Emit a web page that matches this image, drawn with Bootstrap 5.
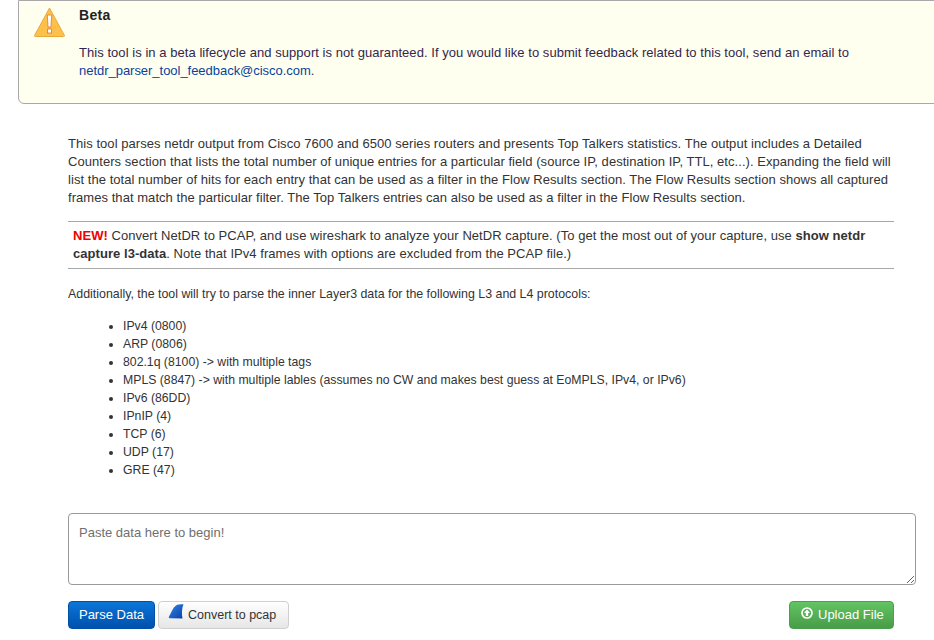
<!DOCTYPE html>
<html lang="en">
  <head>
    <meta charset="UTF-8" />
    <meta name="viewport" content="width=device-width, initial-scale=1.0" />
    <title>NetDR Parser</title>
    <link
      rel="stylesheet"
      href="https://cdn.jsdelivr.net/npm/bootstrap@5.3.0/dist/css/bootstrap.min.css"
    />
    <style>
      body {
        font-family: "Liberation Sans", Arial, sans-serif;
        font-size: 13px;
        line-height: 18px;
        letter-spacing: 0.05px;
        color: #333;
        background: #fff;
        overflow: hidden;
        height: 640px;
      }
      a {
        color: #0a3f9e;
        text-decoration: none;
        letter-spacing: -0.03px;
      }
      p {
        margin: 0;
      }
      .beta-box {
        margin-left: 18px;
        margin-right: -10px;
        height: 104px;
        background: #ffffef;
        border: 1px solid #a8a8a8;
        border-radius: 0 0 0 6px;
        color: #33264d;
      }
      .beta-icon {
        width: 60px;
        padding: 6px 0 0 15px;
        flex: none;
      }
      .beta-title {
        font-size: 14px;
        letter-spacing: 0.3px;
        font-weight: 700;
        color: #222;
        padding-top: 5px;
        margin-bottom: 20px;
      }
      .beta-text {
        padding-right: 80px;
      }
      .page-body {
        padding: 31px 40px 0 68px;
      }
      .new-note {
        border-top: 1px solid #a8a8a8;
        border-bottom: 1px solid #a8a8a8;
        margin: 14px 0 16px;
        padding: 5px;
        height: 48px;
      }
      .new-flag {
        color: #f00000;
        font-weight: 700;
      }
      .plain-line {
        font-size: 12.4px;
        letter-spacing: 0;
      }
      .proto-list {
        margin: 14px 0 0;
        padding-left: 55px;
        font-size: 12.25px;
        letter-spacing: 0;
      }
      .paste-box {
        display: block;
        width: 848px;
        height: 72px;
        margin: 34px 0 16px;
        padding: 10px;
        font-size: 13px;
        line-height: 18px;
        color: #333;
        border: 1px solid #999;
        border-radius: 4px;
      }
      .paste-box::placeholder {
        color: #6f6f6f;
        opacity: 1;
      }
      .btn-row .btn {
        font-size: 13px;
        line-height: 18px;
        height: 28px;
        padding: 4px 10px;
        border-radius: 4px;
        white-space: nowrap;
      }
      .btn-row .btn-parse {
        width: 87px;
        padding: 4px 0;
        color: #fff;
        background: linear-gradient(#0a76d8, #0050ad);
        border: 1px solid #0050a8;
      }
      .btn-row .btn-pcap {
        width: 131px;
        margin-left: 3px;
        padding: 4px 9px;
        font-size: 12.5px;
        color: #333;
        background: linear-gradient(#ffffff, #e6e6e6);
        border: 1px solid #cfcfcf;
      }
      .btn-pcap svg {
        flex: none;
        margin-bottom: 6px;
      }
      .btn-row .btn-upload {
        width: 105px;
        padding: 4px 10px 4px 11px;
        gap: 5px;
        color: #fff;
        background: linear-gradient(#62c462, #489c48);
        border: 1px solid #4a9f4a;
      }
      .btn-upload svg {
        flex: none;
        margin-bottom: 4px;
      }
    </style>
  </head>
  <body>
    <div class="beta-box d-flex">
      <div class="beta-icon">
        <svg width="31" height="31" viewBox="0 0 31 31">
          <path d="M15.5 1 L30.5 28.5 Q30.7 29.5 29.5 29.5 L1.5 29.5 Q.3 29.5 .5 28.5 Z" fill="#fdc04a" stroke="#e8a93c" stroke-width="1" />
          <path d="M13.3 8 h4.4 l-.7 12 h-3 Z" fill="#fff" stroke="#e2762a" stroke-width=".8" />
          <rect x="13.5" y="22" width="4" height="4" fill="#fff" stroke="#e2762a" stroke-width=".8" />
        </svg>
      </div>
      <div class="flex-grow-1">
        <div class="beta-title">Beta</div>
        <p class="beta-text">This tool is in a beta lifecycle and support is not guaranteed. If you would like to submit feedback related to this tool, send an email to</p>
        <p class="beta-text"><a href="#">netdr_parser_tool_feedback@cisco.com</a><span>.</span></p>
      </div>
    </div>

    <div class="page-body">
      <p>
        This tool parses netdr output from Cisco 7600 and 6500 series routers and presents Top Talkers statistics. The output includes a Detailed Counters section that lists the total number of unique entries for a particular field (source IP, destination IP, TTL, etc...). Expanding the field will list the total number of hits for each entry that can be used as a filter in the Flow Results section. The Flow Results section shows all captured frames that match the particular filter. The Top Talkers entries can also be used as a filter in the Flow Results section.
      </p>
      <div class="new-note">
        <div><span class="new-flag">NEW!</span> Convert NetDR to PCAP, and use wireshark to analyze your NetDR capture. (To get the most out of your capture, use <b>show netdr</b></div>
        <div><b>capture l3-data</b>. Note that IPv4 frames with options are excluded from the PCAP file.)</div>
      </div>
      <p class="plain-line">Additionally, the tool will try to parse the inner Layer3 data for the following L3 and L4 protocols:</p>
      <ul class="proto-list">
        <li>IPv4 (0800)</li>
        <li>ARP (0806)</li>
        <li>802.1q (8100) -&gt; with multiple tags</li>
        <li>MPLS (8847) -&gt; with multiple lables (assumes no CW and makes best guess at EoMPLS, IPv4, or IPv6)</li>
        <li>IPv6 (86DD)</li>
        <li>IPnIP (4)</li>
        <li>TCP (6)</li>
        <li>UDP (17)</li>
        <li>GRE (47)</li>
      </ul>
      <textarea class="paste-box" placeholder="Paste data here to begin!"></textarea>
      <div class="btn-row d-flex">
        <button type="button" class="btn btn-parse">Parse Data</button>
        <button type="button" class="btn btn-pcap d-flex align-items-center gap-1">
          <svg width="16" height="16" viewBox="0 0 16 16">
            <defs>
              <linearGradient id="finFill" x1="0" y1="0" x2="1" y2="1">
                <stop offset="0" stop-color="#2f86ee" />
                <stop offset="1" stop-color="#0b3f9f" />
              </linearGradient>
            </defs>
            <path d="M15.5 .3 C12 .3 9.5 .5 8 1.5 C5 3.5 3 9 .8 13.2 Q.6 14.2 2 14.2 L14.5 14.5 C13.5 10 13.8 4.5 15.5 .3 Z" fill="url(#finFill)" />
          </svg>
          Convert to pcap
        </button>
        <button type="button" class="btn btn-upload ms-auto d-flex align-items-center">
          <svg width="12" height="12" viewBox="0 0 12 12">
            <circle cx="6" cy="6" r="5" fill="none" stroke="#fff" stroke-width="1.7" />
            <path d="M6 2.6 L9 6 H7.2 V9 H4.8 V6 H3 Z" fill="#fff" />
          </svg>
          Upload File
        </button>
      </div>
    </div>
  </body>
</html>
